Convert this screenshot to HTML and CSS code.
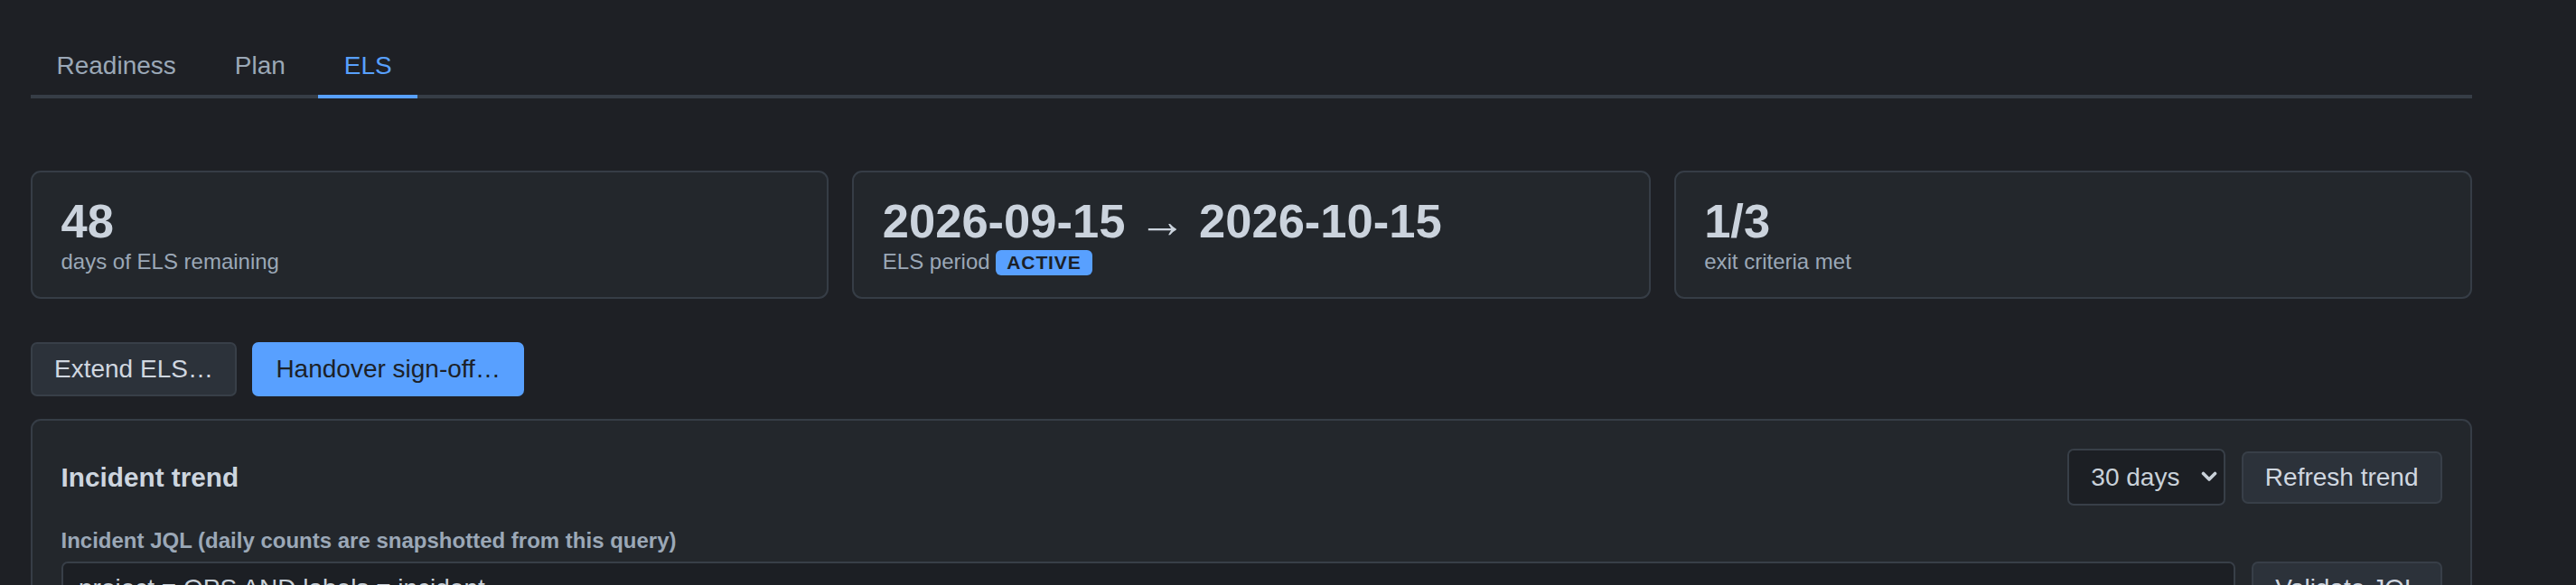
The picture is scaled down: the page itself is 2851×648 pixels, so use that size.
FILE: index.html
```html
<!DOCTYPE html>
<html lang="en">
<head>
<meta charset="utf-8">
<title>ELS</title>
<link rel="stylesheet" href="styles.css">
</head>
<body>
<div class="app">
  <nav class="tabs">
    <button class="tab">Readiness</button>
    <button class="tab">Plan</button>
    <button class="tab tab-active">ELS</button>
  </nav>

  <section class="stats">
    <div class="card">
      <div class="stat-value">48</div>
      <div class="stat-label">days of ELS remaining</div>
    </div>
    <div class="card">
      <div class="stat-value">2026-09-15 <span class="arrow">→</span> 2026-10-15</div>
      <div class="stat-label">ELS period <span class="badge">ACTIVE</span></div>
    </div>
    <div class="card">
      <div class="stat-value">1/3</div>
      <div class="stat-label">exit criteria met</div>
    </div>
  </section>

  <div class="actions">
    <button class="btn">Extend ELS…</button>
    <button class="btn btn-primary">Handover sign-off…</button>
  </div>

  <section class="panel">
    <div class="panel-head">
      <h2 class="panel-title">Incident trend</h2>
      <div class="controls">
        <div class="select-wrap">
          <select class="select">
            <option>30 days</option>
            <option>60 days</option>
            <option>90 days</option>
          </select>
          <svg class="chevron" width="18" height="12" viewBox="0 0 18 12" aria-hidden="true"><polyline points="2.5,2.5 9,9 15.5,2.5" fill="none" stroke="#c9d1d9" stroke-width="3.6" stroke-linecap="round" stroke-linejoin="round"/></svg>
        </div>
        <button class="btn btn-sm">Refresh trend</button>
      </div>
    </div>
    <label class="field-label" for="jql">Incident JQL (daily counts are snapshotted from this query)</label>
    <div class="jql-row">
      <input id="jql" class="input" type="text" value="project = OPS AND labels = incident">
      <button class="btn">Validate JQL</button>
    </div>
  </section>
</div>
</body>
</html>
```

FILE: styles.css
```css
* { box-sizing: border-box; }

html, body {
  margin: 0;
  background: #1e2025;
}

body {
  font-family: "Liberation Sans", Arial, sans-serif;
  color: #cdd5df;
  height: 648px;
  overflow: hidden;
}

.app {
  width: 2702px;
  margin-left: 34px;
  padding-top: 43px;
}

/* Tabs */
.tabs {
  display: flex;
  gap: 8px;
  border-bottom: 4px solid #363d46;
}

.tab {
  font-family: inherit;
  font-size: 28px;
  line-height: 32px;
  color: #9ba8b7;
  background: none;
  border: 0;
  border-bottom: 4px solid transparent;
  margin-bottom: -4px;
  padding: 14px 28.5px 16px;
  cursor: pointer;
}

.tab-active {
  color: #58a0ff;
  border-bottom-color: #58a0ff;
}

/* Stat cards */
.stats {
  margin-top: 80px;
  display: grid;
  grid-template-columns: repeat(3, 1fr);
  gap: 26px;
}

.card {
  background: #23272c;
  border: 2px solid #363d46;
  border-radius: 11px;
  padding: 25px 31.5px 24px;
}

.stat-value {
  font-size: 52.5px;
  font-weight: 700;
  line-height: 57.75px;
  color: #cbd3dd;
  white-space: nowrap;
}

.arrow {
  font-weight: 400;
}

.stat-label {
  margin-top: 2px;
  font-size: 24px;
  line-height: 27.6px;
  color: #9ba8b7;
}

.badge {
  display: inline-block;
  background: #58a0ff;
  color: #1c2026;
  font-size: 21px;
  font-weight: 700;
  letter-spacing: 0.9px;
  line-height: 24px;
  padding: 2px 12px;
  border-radius: 6px;
}

/* Buttons */
.actions {
  margin-top: 48px;
  display: flex;
  gap: 17.5px;
}

.btn {
  font-family: inherit;
  font-size: 28px;
  line-height: 32px;
  color: #d0d7e0;
  background: #2c323a;
  border: 2px solid #383f48;
  border-radius: 7px;
  padding: 12px 24px;
  white-space: nowrap;
  cursor: pointer;
}

.btn-primary {
  background: #58a0ff;
  border-color: #58a0ff;
  color: #1c2128;
}

.btn-sm {
  padding: 11px 24px;
}

/* Panel */
.panel {
  margin-top: 25px;
  background: #23272c;
  border: 2px solid #363d46;
  border-radius: 11px;
  padding: 31.5px 31.5px 40px;
}

.panel-head {
  display: flex;
  align-items: center;
  justify-content: space-between;
}

.panel-title {
  margin: 0;
  font-size: 29.75px;
  font-weight: 700;
  line-height: 34px;
  color: #cdd5df;
}

.controls {
  display: flex;
  align-items: center;
  gap: 17.5px;
}

.select-wrap {
  position: relative;
}

.select {
  appearance: none;
  -webkit-appearance: none;
  width: 175px;
  font-family: inherit;
  font-size: 28px;
  line-height: 32px;
  height: 63px;
  color: #c9d1d9;
  background: #1c1f24;
  border: 2px solid #383f48;
  border-radius: 7px;
  padding: 0 40px 0 24px;
}

.chevron {
  position: absolute;
  right: 9px;
  top: 25px;
  pointer-events: none;
}

.field-label {
  display: block;
  margin-top: 25px;
  font-size: 24px;
  font-weight: 700;
  line-height: 27.6px;
  color: #9ba8b7;
}

.jql-row {
  margin-top: 9px;
  display: flex;
  gap: 18px;
}

.input {
  flex: 1;
  font-family: inherit;
  font-size: 28px;
  line-height: 32px;
  color: #c9d1d9;
  background: #1c1f24;
  border: 2px solid #383f48;
  border-radius: 7px;
  padding: 12px 17.5px;
}
```
